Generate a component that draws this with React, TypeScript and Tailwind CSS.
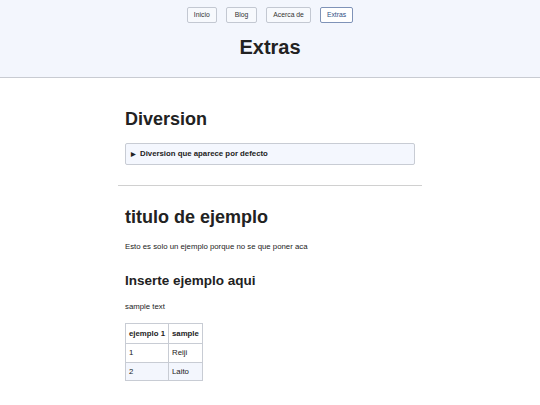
import React from "react";

export default function App() {
  const btn =
    "h-[16px] px-[6px] flex items-center rounded-[2px] border border-[#c3c8d2] bg-[#f7f9fd] text-[6.8px] text-[#333]";
  const cell = "border border-[#c8ccd4] px-[3px] whitespace-nowrap";
  return (
    <div className="min-h-[405px] bg-white text-[#222]" style={{ fontFamily: '"Liberation Sans", Arial, sans-serif' }}>
      <header className="h-[78px] bg-[#f3f6fd] border-b border-[#c8cbd2] flex flex-col items-center">
        <nav className="mt-[7px] flex gap-[9px]">
          <span className={btn}>Inicio</span>
          <span className={`${btn} px-[8px]`}>Blog</span>
          <span className={btn}>Acerca de</span>
          <span className="h-[16px] px-[6px] flex items-center rounded-[2px] border border-[#7f93b8] bg-white text-[6.8px] text-[#2f4f85]">Extras</span>
        </nav>
        <h1 className="mt-[11px] text-[20px] leading-[26px] font-bold">Extras</h1>
      </header>
      <main className="w-[304px] mx-auto">
        <section className="px-[7px] pt-[29px] pb-[20px]">
          <h2 className="text-[18px] leading-[24px] font-bold">Diversion</h2>
          <div className="mt-[12px] h-[22px] flex items-center gap-[4px] px-[5px] rounded-[2px] border border-[#c8ccd4] bg-[#f4f7fe] text-[7.8px] font-bold">
            <span className="text-[6px]">▶</span>
            <span>Diversion que aparece por defecto</span>
          </div>
        </section>
        <hr className="border-t border-[#d0d0d0]" />
        <section className="px-[7px] pt-[19px] pb-[24px]">
          <h2 className="text-[18px] leading-[24px] font-bold">titulo de ejemplo</h2>
          <p className="mt-[13px] text-[7.8px] leading-[10px]">Esto es solo un ejemplo porque no se que poner aca</p>
          <h3 className="mt-[20px] text-[13.5px] leading-[18px] font-bold">Inserte ejemplo aqui</h3>
          <p className="mt-[12px] text-[7.8px] leading-[10px]">sample text</p>
          <table className="mt-[11px] border-collapse text-[7.8px]">
            <thead>
              <tr className="h-[20px] bg-white">
                <th className={`${cell} text-left font-bold w-[43px]`}>ejemplo 1</th>
                <th className={`${cell} text-left font-bold w-[34px]`}>sample</th>
              </tr>
            </thead>
            <tbody>
              <tr className="h-[19px] bg-white">
                <td className={cell}>1</td>
                <td className={cell}>Reiji</td>
              </tr>
              <tr className="h-[18px] bg-[#f3f6fd]">
                <td className={cell}>2</td>
                <td className={cell}>Laito</td>
              </tr>
            </tbody>
          </table>
        </section>
        <hr className="border-t border-[#d0d0d0]" />
      </main>
    </div>
  );
}
